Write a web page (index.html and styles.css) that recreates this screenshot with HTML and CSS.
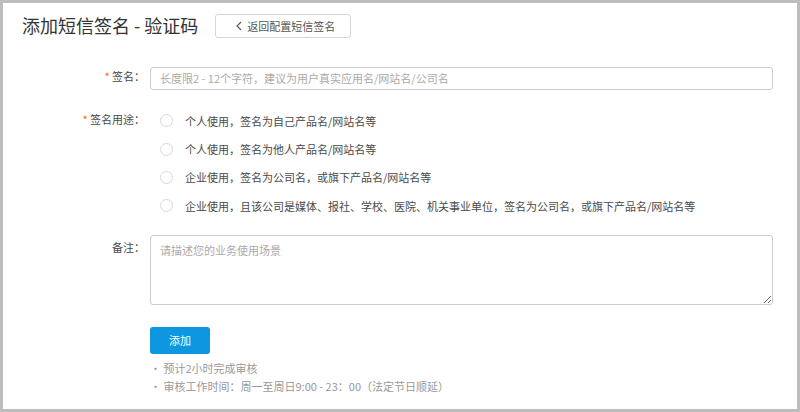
FILE: index.html
```html
<!DOCTYPE html>
<html lang="zh-CN">
<head>
    <meta charset="UTF-8">
    <meta name="viewport" content="width=device-width, initial-scale=1.0">
    <title>添加短信签名 - 验证码</title>
    <link rel="stylesheet" href="styles.css">
</head>
<body>
    <div class="page">
        <div class="header">
            <h1 class="title">添加短信签名 - 验证码</h1>
            <button class="back-btn">
                <svg class="back-icon" width="8" height="10" viewBox="0 0 8 10"><path d="M6 1 L2 5 L6 9" fill="none" stroke="#555" stroke-width="1.1"/></svg>
                返回配置短信签名
            </button>
        </div>

        <div class="form">
            <div class="row row-name">
                <label class="label"><span class="star">*</span> 签名：</label>
                <div class="field">
                    <input class="text-input" type="text" placeholder="长度限2 - 12个字符，建议为用户真实应用名/网站名/公司名">
                </div>
            </div>

            <div class="row row-usage">
                <label class="label"><span class="star">*</span> 签名用途：</label>
                <div class="field radios">
                    <label class="radio"><input type="radio" name="usage"> 个人使用，签名为自己产品名/网站名等</label>
                    <label class="radio"><input type="radio" name="usage"> 个人使用，签名为他人产品名/网站名等</label>
                    <label class="radio"><input type="radio" name="usage"> 企业使用，签名为公司名，或旗下产品名/网站名等</label>
                    <label class="radio"><input type="radio" name="usage"> 企业使用，且该公司是媒体、报社、学校、医院、机关事业单位，签名为公司名，或旗下产品名/网站名等</label>
                </div>
            </div>

            <div class="row row-note">
                <label class="label">备注：</label>
                <div class="field">
                    <textarea class="text-area" placeholder="请描述您的业务使用场景"></textarea>
                </div>
            </div>

            <div class="row row-submit">
                <div class="label"></div>
                <div class="field">
                    <button class="submit-btn">添加</button>
                    <p class="tip">· 预计2小时完成审核</p>
                    <p class="tip">· 审核工作时间：周一至周日9:00 - 23：00（法定节日顺延）</p>
                </div>
            </div>
        </div>
    </div>
</body>
</html>
```

FILE: styles.css
```css
* {
    box-sizing: border-box;
}
body {
    margin: 0;
    font-family: "Noto Sans CJK SC", "Noto Sans", sans-serif;
    color: #4a4a4a;
    background: #fff;
}
.page {
    width: 800px;
    height: 412px;
    border: 3px solid #bdbdbd;
    overflow: hidden;
}
.header {
    display: flex;
    align-items: center;
    padding: 11px 0 0 19px;
}
.title {
    margin: 0;
    font-size: 18px;
    font-weight: normal;
    color: #333;
    line-height: 24px;
    position: relative;
    top: -1px;
}
.back-btn {
    display: flex;
    align-items: center;
    gap: 4px;
    margin-left: 17px;
    height: 24px;
    width: 136px;
    padding: 0 0 0 19px;
    border: 1px solid #d6d6d6;
    border-radius: 3px;
    background: #fff;
    font-family: inherit;
    font-size: 11px;
    color: #555;
    cursor: pointer;
}
.form {
    padding-right: 24px;
}
.row {
    display: flex;
}
.label {
    width: 142px;
    flex-shrink: 0;
    margin-right: 5px;
    text-align: right;
    font-size: 11px;
    line-height: 24px;
    color: #4a4a4a;
}
.star {
    color: #f60;
}
.field {
    flex: 1;
}
.row-name {
    margin-top: 26px;
}
.text-input {
    width: 100%;
    height: 23px;
    border: 1px solid #ccc;
    border-radius: 3px;
    padding: 0 9px;
    font-family: inherit;
    font-size: 11px;
    color: #333;
}
.text-input::placeholder,
.text-area::placeholder {
    color: #aaa;
}
.row-usage {
    margin-top: 17px;
}
.row-usage .label {
    margin-top: 0;
}
.radios {
    display: flex;
    flex-direction: column;
}
.radio {
    display: flex;
    align-items: center;
    height: 28.4px;
    font-size: 11px;
    color: #4a4a4a;
}
.radio input {
    appearance: none;
    width: 13px;
    height: 13px;
    margin: 0 12px 0 10px;
    border: 1px solid #d8d8d8;
    border-radius: 50%;
    background: #fff;
}
.row-note {
    margin-top: 15px;
}
.text-area {
    display: block;
    width: 100%;
    height: 70px;
    border: 1px solid #ccc;
    border-radius: 3px;
    padding: 6px 9px;
    font-family: inherit;
    font-size: 11px;
    color: #333;
}
.row-submit {
    margin-top: 21px;
}
.submit-btn {
    width: 60px;
    height: 27px;
    border: none;
    border-radius: 3px;
    background: #0e97e0;
    color: #fff;
    font-family: inherit;
    font-size: 11px;
    cursor: pointer;
    margin-bottom: 5px;
}
.tip {
    margin: 0;
    font-size: 11px;
    line-height: 18px;
    color: #999;
}
```
